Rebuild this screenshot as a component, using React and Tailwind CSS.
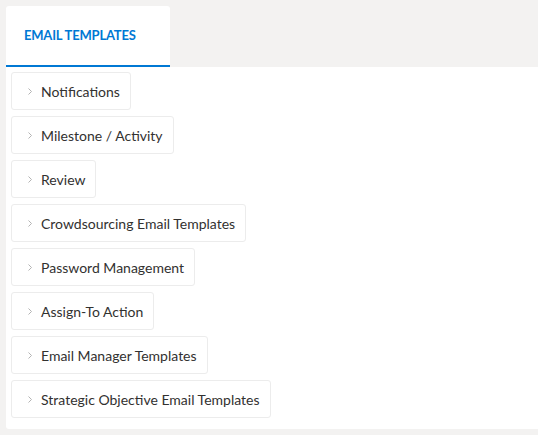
import React from 'react';

const templateGroups = [
  'Notifications',
  'Milestone / Activity',
  'Review',
  'Crowdsourcing Email Templates',
  'Password Management',
  'Assign-To Action',
  'Email Manager Templates',
  'Strategic Objective Email Templates',
];

const Chevron = () => (
  <svg width="6" height="9" viewBox="0 0 6 9" className="shrink-0">
    <path d="M1.5 1.5 L4.5 4.5 L1.5 7.5" fill="none" stroke="#b3b3b3" strokeWidth="1" />
  </svg>
);

export default function App() {
  return (
    <div className="min-h-[435px] w-[538px] bg-[#f3f2f1] pt-[6px] pl-[6px] pb-[6px] font-['Lato','Liberation_Sans',sans-serif]">
      {/* Tab strip */}
      <div className="flex">
        <div className="w-[164px] h-[61px] bg-white rounded-t-[3px] border-b-2 border-[#0078d4] flex items-center pl-[18px]">
          <span className="text-[13px] font-bold text-[#0078d4] tracking-[-0.2px]">EMAIL TEMPLATES</span>
        </div>
      </div>

      {/* Panel */}
      <div className="bg-white rounded-bl-[3px] pt-[5px] pb-[11px] pl-[5px] flex flex-col gap-[6px]">
        {templateGroups.map((name) => (
          <div
            key={name}
            className="self-start h-[38px] flex items-center gap-[8px] pl-[15px] pr-[10px] border border-[#ececec] rounded-[3px] bg-white"
          >
            <Chevron />
            <span className="text-[14px] text-[#323130]">{name}</span>
          </div>
        ))}
      </div>
    </div>
  );
}
